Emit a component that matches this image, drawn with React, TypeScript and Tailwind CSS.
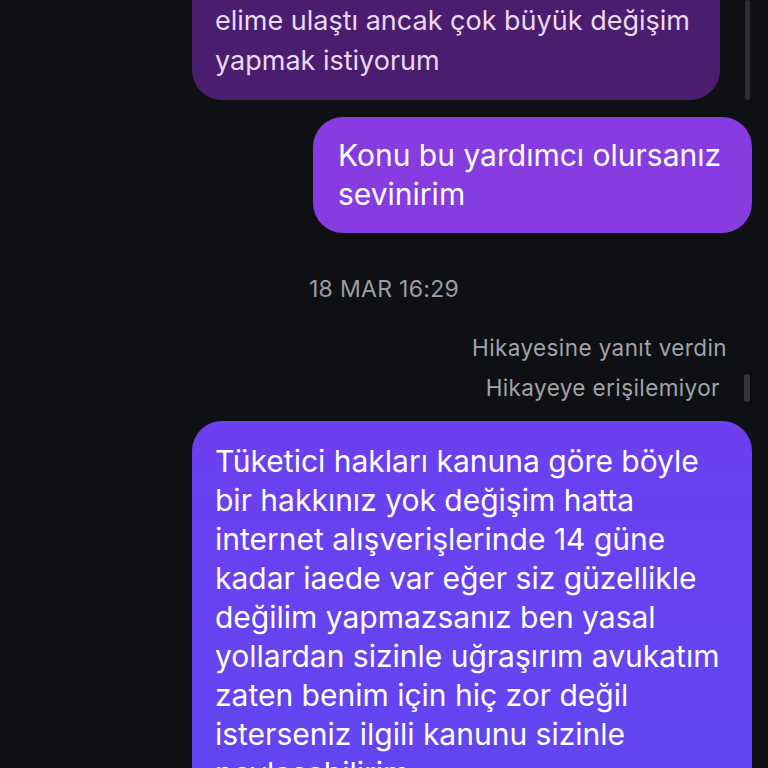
export default function App() {
  return (
    <div className="h-[768px] w-[768px] overflow-hidden bg-[#0e1014] font-['Inter','Noto_Sans',sans-serif] antialiased">
      <div className="flex flex-col">
        {/* incoming reply, cut at top */}
        <div className="flex items-start">
          <div className="-mt-[60px] ml-[192px] w-[528px] whitespace-nowrap rounded-[30px] bg-[#4b1d6f] px-[23px] pb-[19px] pt-[61px] text-[27px] leading-[40px] text-[#ead9f2]">
            <p>elime ulaştı ancak çok büyük değişim</p>
            <p>yapmak istiyorum</p>
          </div>
          <div className="ml-[25px] h-[100px] w-[5px] rounded-full bg-[#2e3035]" />
        </div>

        <div className="mr-[16px] mt-[17px] w-[439px] self-end whitespace-nowrap rounded-[30px] bg-[#863ce0] px-[25px] py-[19px] text-[30px] leading-[39px] text-white">
          <p>Konu bu yardımcı olursanız</p>
          <p>sevinirim</p>
        </div>

        <p className="mt-[43px] text-center text-[23px] leading-[26px] tracking-[0.3px] text-[#9c9da3]">
          18 MAR 16:29
        </p>

        <p className="mr-[41px] mt-[33px] text-right text-[22.5px] leading-[26px] tracking-[0.4px] text-[#a2a3a9]">
          Hikayesine yanıt verdin
        </p>
        <div className="mt-[13px] flex items-center justify-end">
          <p className="text-[22.5px] leading-[26px] tracking-[0.4px] text-[#a2a3a9]">Hikayeye erişilemiyor</p>
          <div className="ml-[24px] mr-[18px] h-[28px] w-[6px] rounded-full bg-[#34363b]" />
        </div>

        <div className="mr-[16px] mt-[19px] w-[560px] self-end whitespace-nowrap rounded-[30px] bg-gradient-to-b from-[#6c3ff0] to-[#6047f2] px-[23px] pb-[40px] pt-[21px] text-[30px] leading-[39px] text-white">
          <p>Tüketici hakları kanuna göre böyle</p>
          <p>bir hakkınız yok değişim hatta</p>
          <p>internet alışverişlerinde 14 güne</p>
          <p>kadar iaede var eğer siz güzellikle</p>
          <p>değilim yapmazsanız ben yasal</p>
          <p>yollardan sizinle uğraşırım avukatım</p>
          <p>zaten benim için hiç zor değil</p>
          <p>isterseniz ilgili kanunu sizinle</p>
          <p>paylaşabilirim</p>
        </div>
      </div>
    </div>
  );
}
